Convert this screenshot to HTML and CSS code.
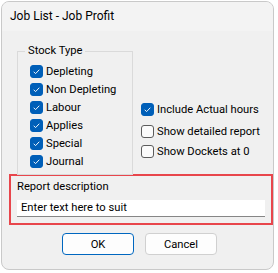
FILE: index.html
```html
<!DOCTYPE html>
<html lang="en">
<head>
  <meta charset="UTF-8" />
  <title>Job List - Job Profit</title>
  <link rel="stylesheet" href="styles.css">
</head>
<body>
  <div class="window">
    <div class="titlebar">Job List - Job Profit</div>

    <div class="top">
      <fieldset class="group">
        <legend>Stock Type</legend>
        <label class="check"><span class="box on"><svg viewBox="0 0 13 13"><path d="M3.2 6.8 L5.4 9 L9.8 4.4" /></svg></span>Depleting</label>
        <label class="check"><span class="box on"><svg viewBox="0 0 13 13"><path d="M3.2 6.8 L5.4 9 L9.8 4.4" /></svg></span>Non Depleting</label>
        <label class="check"><span class="box on"><svg viewBox="0 0 13 13"><path d="M3.2 6.8 L5.4 9 L9.8 4.4" /></svg></span>Labour</label>
        <label class="check"><span class="box on"><svg viewBox="0 0 13 13"><path d="M3.2 6.8 L5.4 9 L9.8 4.4" /></svg></span>Applies</label>
        <label class="check"><span class="box on"><svg viewBox="0 0 13 13"><path d="M3.2 6.8 L5.4 9 L9.8 4.4" /></svg></span>Special</label>
        <label class="check"><span class="box on"><svg viewBox="0 0 13 13"><path d="M3.2 6.8 L5.4 9 L9.8 4.4" /></svg></span>Journal</label>
      </fieldset>

      <div class="options">
        <label class="check"><span class="box on"><svg viewBox="0 0 13 13"><path d="M3.2 6.8 L5.4 9 L9.8 4.4" /></svg></span>Include Actual hours</label>
        <label class="check gap"><span class="box"></span>Show detailed report</label>
        <label class="check"><span class="box"></span>Show Dockets at 0</label>
      </div>
    </div>

    <div class="desc">
      <div class="desc-label">Report description</div>
      <div class="field">Enter text here to suit</div>
    </div>

    <div class="buttons">
      <button class="btn default">OK</button>
      <button class="btn">Cancel</button>
    </div>
  </div>
</body>
</html>
```

FILE: styles.css
```css
body {
  margin: 0;
  padding: 1px;
  background: #fff;
  font-family: Roboto, sans-serif;
  font-size: 11.2px;
  color: #000;
}
.window {
  width: 271px;
  height: 267px;
  border: 1px solid #c9c9c9;
  border-radius: 8px;
  background: #f0f0f0;
  overflow: hidden;
}
.titlebar {
  height: 29px;
  line-height: 29px;
  padding-left: 8px;
  background: #f3f3f3;
  font-size: 12px;
}
.top {
  display: flex;
  margin-top: 12px;
  margin-left: 15px;
}
.group {
  box-sizing: border-box;
  width: 116px;
  height: 132px;
  margin: 0;
  padding: 3px 0 0 12px;
  border: 1px solid #dadada;
}
.group legend {
  padding: 0 3px;
  margin-left: -5px;
  line-height: 16px;
}
.check {
  display: flex;
  align-items: center;
  height: 18px;
  white-space: nowrap;
}
.box {
  width: 13px;
  height: 13px;
  box-sizing: border-box;
  border: 1px solid #5c5c5c;
  border-radius: 3px;
  background: #fbfbfb;
  margin-right: 3px;
  flex-shrink: 0;
}
.box.on {
  background: #005fb8;
  border-color: #005fb8;
}
.box svg {
  display: block;
  width: 11px;
  height: 11px;
  fill: none;
  stroke: #fff;
  stroke-width: 1.1;
}
.options {
  margin-left: 8px;
  padding-top: 56px;
}
.options .check {
  height: 20px;
}
.options .gap {
  margin-top: 2px;
}
.desc {
  width: 260px;
  height: 47px;
  margin: -1px 0 0 7px;
  border: 2px solid #e8464c;
}
.desc-label {
  padding: 3px 0 0 6px;
  line-height: 16px;
}
.field {
  width: 244px;
  height: 16px;
  margin: 5px 0 0 6px;
  padding-left: 4px;
  line-height: 16px;
  background: #fff;
  border-bottom: 1px solid #868686;
}
.buttons {
  display: flex;
  gap: 11px;
  margin: 8px 0 0 60px;
}
.btn {
  width: 72px;
  height: 22px;
  padding: 0;
  font-family: Roboto, sans-serif;
  font-size: 11.2px;
  background: #fdfdfd;
  border: 1px solid #d0d0d0;
  border-radius: 4px;
}
.btn.default {
  border-color: #0067c0;
}
```
